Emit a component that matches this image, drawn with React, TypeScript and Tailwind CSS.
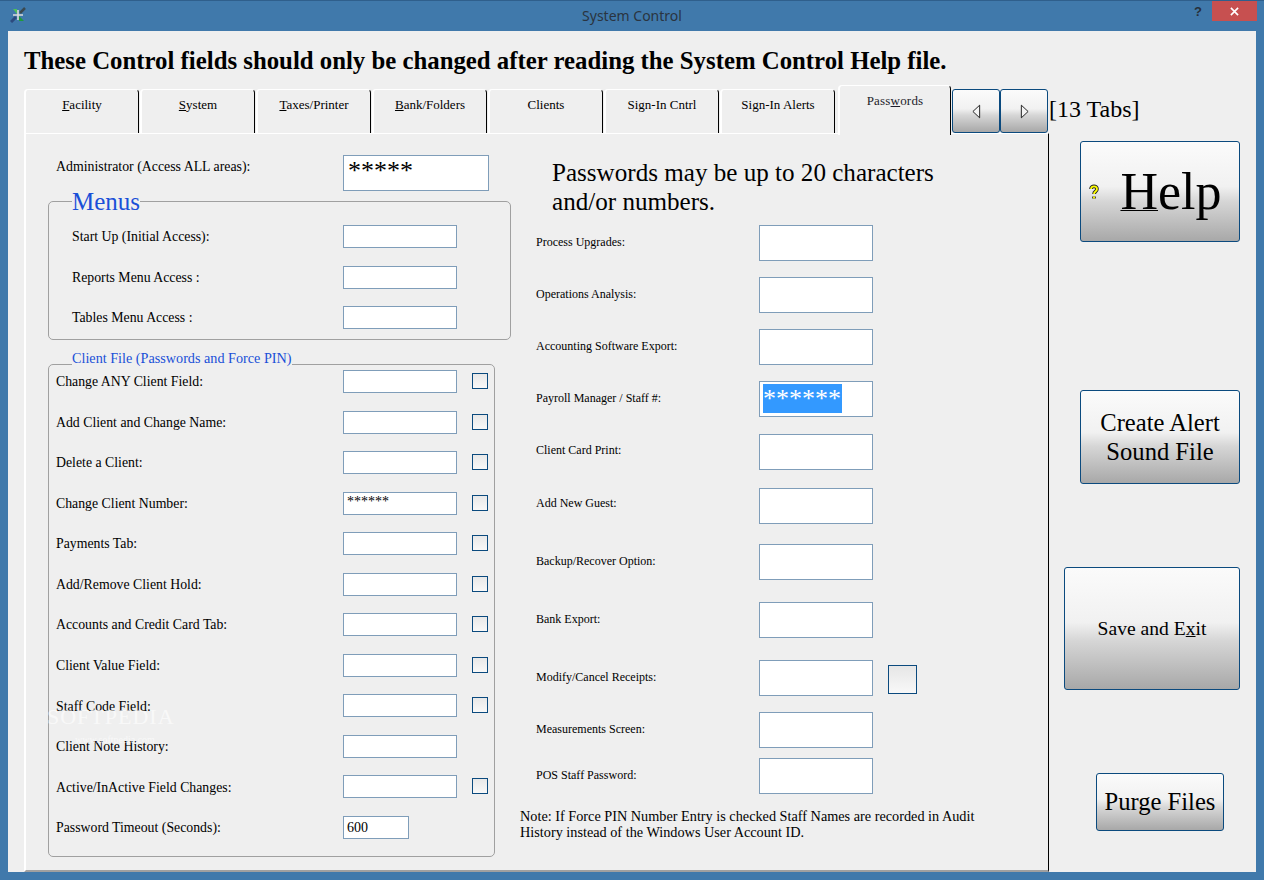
const serif = "font-['Liberation_Serif','Times_New_Roman',serif]";

const tabs = [
  { label: "acility", key: "F" },
  { label: "ystem", key: "S" },
  { label: "axes/Printer", key: "T" },
  { label: "ank/Folders", key: "B" },
  { label: "Clients", key: "" },
  { label: "Sign-In Cntrl", key: "" },
  { label: "Sign-In Alerts", key: "" },
];

const clientRows = [
  { label: "Change ANY Client Field:", check: true },
  { label: "Add Client and Change Name:", check: true },
  { label: "Delete a Client:", check: true },
  { label: "Change Client Number:", check: true, value: "******" },
  { label: "Payments Tab:", check: true },
  { label: "Add/Remove Client Hold:", check: true },
  { label: "Accounts and Credit Card Tab:", check: true },
  { label: "Client Value Field:", check: true },
  { label: "Staff Code Field:", check: true },
  { label: "Client Note History:", check: false },
  { label: "Active/InActive Field Changes:", check: true },
];

// gaps are the distance down from the previous field, the form isn't on an even pitch
const rightRows = [
  { label: "Process Upgrades:", mt: "mt-0", pb: "pb-[2px]" },
  { label: "Operations Analysis:", mt: "mt-[16px]", pb: "pb-[2px]" },
  { label: "Accounting Software Export:", mt: "mt-[16px]", pb: "pb-[2px]" },
  { label: "Payroll Manager / Staff #:", mt: "mt-[16px]", pb: "pb-[2px]", selected: "******" },
  { label: "Client Card Print:", mt: "mt-[17px]", pb: "pb-[4px]" },
  { label: "Add New Guest:", mt: "mt-[18px]", pb: "pb-[6px]" },
  { label: "Backup/Recover Option:", mt: "mt-[20px]", pb: "pb-[2px]" },
  { label: "Bank Export:", mt: "mt-[22px]", pb: "pb-[2px]" },
  { label: "Modify/Cancel Receipts:", mt: "mt-[22px]", pb: "pb-[2px]", box: true },
  { label: "Measurements Screen:", mt: "mt-[16px]", pb: "pb-[2px]" },
  { label: "POS Staff Password:", mt: "mt-[10px]", pb: "pb-[2px]" },
];

const gradient = "bg-[linear-gradient(to_bottom,#fbfbfb_0%,#f1f1f1_45%,#d6d6d6_60%,#a8a8a8_100%)]";
const button = `border border-[#0b4a7e] rounded-[3px] ${gradient} text-black ${serif}`;

function Field({ className, children }: { className: string; children?: React.ReactNode }) {
  return <div className={`bg-white border border-[#7f9db9] shrink-0 ${className}`}>{children}</div>;
}

function Check() {
  return <div className="w-4 h-4 shrink-0 ml-[15px] -mt-[1px] border border-[#0b4a7e] bg-[linear-gradient(to_bottom,#e8e8e8,#f8f8f8)]" />;
}

function Menus() {
  const rows = ["Start Up (Initial Access):", "Reports Menu Access :", "Tables Menu Access :"];
  return (
    <div className="relative mt-[10px] w-[463px] h-[139px] border border-[#a0a0a0] rounded-[5px] pt-[23px] pl-[23px]">
      <div className="absolute left-[23px] -top-[14px] bg-[#efefef] text-[#1a4fd8] text-[25px] leading-[28px]">Menus</div>
      <div className="flex flex-col gap-[17.5px]">
        {rows.map((r) => (
          <div key={r} className="flex items-center h-[23px]">
            <div className="w-[271px] text-[13.8px] pt-[2px]">{r}</div>
            <Field className="w-[114px] h-[23px]" />
          </div>
        ))}
      </div>
    </div>
  );
}

function ClientFile() {
  return (
    <div className="relative mt-[24px] w-[447px] h-[493px] border border-[#a0a0a0] rounded-[5px] pt-[5px] pl-[7px]">
      <div className="absolute left-[23px] -top-[15px] bg-[#efefef] text-[#1a4fd8] text-[14.2px] leading-[16px] pb-[3px]">
        Client File (Passwords and Force PIN)
      </div>
      <div className="flex flex-col gap-[17.55px]">
        {clientRows.map((r) => (
          <div key={r.label} className="flex items-center h-[23px]">
            <div className="w-[287px] text-[13.8px] pt-[2px]">{r.label}</div>
            <Field className="w-[114px] h-[23px] pl-[3px] text-[14px] leading-[17px]">{r.value}</Field>
            {r.check && <Check />}
          </div>
        ))}
        <div className="flex items-center h-[23px]">
          <div className="w-[287px] text-[13.8px] pt-[2px]">Password Timeout (Seconds):</div>
          <Field className="w-[66px] h-[23px] pl-[3px] text-[14px] leading-[21px]">600</Field>
        </div>
      </div>
    </div>
  );
}

function RightForm() {
  return (
    <div className="w-[500px] pt-[25px] pl-[25px]">
      <div className="pl-[31px] text-[25.1px] leading-[29px] h-[67px] -mt-[1px]">
        Passwords may be up to 20 characters
        <br />
        and/or numbers.
      </div>
      <div className="flex flex-col pl-[15px]">
        {rightRows.map((r) => (
          <div key={r.label} className={`flex items-center h-[36px] ${r.mt}`}>
            <div className={`w-[223px] text-[12px] ${r.pb}`}>{r.label}</div>
            <Field className="w-[114px] h-[36px] pl-[3px] pt-[2px]">
              {r.selected && (
                <span className="block w-[79px] h-[29px] bg-[#3399ff] text-white text-[26px] leading-[29px]">{r.selected}</span>
              )}
            </Field>
            {r.box && (
              <div className="w-[29px] h-[29px] ml-[15px] mt-[2px] border border-[#0b4a7e] bg-[linear-gradient(to_bottom,#e6e6e6,#f8f8f8)]" />
            )}
          </div>
        ))}
      </div>
      <p className="mt-[14px] -ml-[1px] text-[14.25px] leading-[16px] w-[480px]">
        Note: If Force PIN Number Entry is checked Staff Names are recorded in Audit
        <br />
        History instead of the Windows User Account ID.
      </p>
    </div>
  );
}

export default function App() {
  return (
    <div className={`relative w-[1264px] h-[880px] overflow-hidden bg-[#4079ab] border-t border-[#2f5f8c] flex flex-col ${serif} text-black`}>
      {/* title bar */}
      <div className="relative h-[30px] shrink-0 flex justify-center pt-[5px]">
        <svg viewBox="0 0 16 16" className="absolute left-[10px] top-[6px] w-4 h-4">
          <path d="M1 15 L6 10" stroke="#2c4a7e" strokeWidth="3" />
          <path d="M15 1 L10 6" stroke="#3b4a50" strokeWidth="2.5" />
          <path d="M9 9 L14 14 L9 14 Z" fill="#1f9a3a" />
          <path d="M3 2 L7 2 L7 7 Z" fill="#4fc05a" />
          <path d="M8 3 V13 M3 8 H13" stroke="#dcdcdc" strokeWidth="1.6" />
        </svg>
        <span className="font-['Noto_Sans',sans-serif] text-[14px] leading-[19px] text-[#2a3440]">System Control</span>
        <span className="absolute left-[1194px] top-[2px] font-['Liberation_Sans',sans-serif] font-bold text-[13px] leading-[18px] text-[#27303a]">?</span>
        <div className="absolute left-[1212px] top-0 w-[45px] h-[20px] bg-[#c75050] flex items-center justify-center">
          <svg viewBox="0 0 10 10" className="w-[9px] h-[9px]">
            <path d="M1 1 L9 9 M9 1 L1 9" stroke="#fff" strokeWidth="1.8" />
          </svg>
        </div>
      </div>

      {/* client area */}
      <div className="relative mx-[8px] h-[841px] bg-[#efefef]">
        <h1 className="pl-[16px] pt-[15px] h-[54px] text-[24.8px] leading-[29px] font-bold">
          These Control fields should only be changed after reading the System Control Help file.
        </h1>

        {/* tab strip */}
        <div className="relative z-10 flex items-end h-[48px] pl-[16px]">
          {tabs.map((t) => (
            <div key={t.label} className="w-[115px] mr-[1px] h-[44px] shrink-0 border-t border-l-2 border-white border-r border-r-black rounded-t-[4px] text-center text-[13px] leading-[17px] pt-[6px]">
              <span className="underline">{t.key}</span>
              {t.label}
            </div>
          ))}
          {/* active tab hangs over the page's top line */}
          <div className="w-[113px] h-[50px] -mb-[2px] shrink-0 ml-[2px] bg-[#efefef] border-t border-l-2 border-white border-r border-r-black rounded-t-[4px] text-center text-[13px] leading-[17px] pt-[6px] tracking-[0.2px] text-[#1c1c2a]">
            Pass<span className="underline">w</span>ords
          </div>
          <div className="flex h-[44px] shrink-0 ml-[1px]">
            <button className={`w-[48px] h-[44px] flex items-center justify-center ${button}`}>
              <svg viewBox="0 0 10 16" className="w-[9px] h-[15px]">
                <path d="M8.5 1 V15 L1 8 Z" fill="#f4f4f4" stroke="#111" />
              </svg>
            </button>
            <button className={`w-[48px] h-[44px] flex items-center justify-center ${button}`}>
              <svg viewBox="0 0 10 16" className="w-[9px] h-[15px]">
                <path d="M1.5 1 V15 L9 8 Z" fill="#f4f4f4" stroke="#111" />
              </svg>
            </button>
          </div>
          <div className="h-[44px] pl-[1px] pt-[2px] text-[24px] leading-[36px] whitespace-nowrap">[13 Tabs]</div>
        </div>

        <div className="flex h-[739px]">
          {/* tab page */}
          <div className="w-[1025px] ml-[16px] shrink-0 h-[739px] border-l-2 border-t border-white border-b-2 border-b-[#a0a0a0] border-r border-r-black flex">
            <div className="w-[470px] shrink-0 pl-[22px] pt-[21px]">
              <div className="flex pl-[8px] h-[36px]">
                <div className="w-[287px] text-[13.85px] leading-[18px] pt-[3px]">Administrator (Access ALL areas):</div>
                <Field className="w-[146px] h-[36px] pl-[4px] pt-[1px] text-[26px] leading-[28px]">*****</Field>
              </div>
              <Menus />
              <ClientFile />
            </div>
            <RightForm />
          </div>

          {/* right hand buttons */}
          <div className="relative flex-1 flex flex-col items-end pr-[16px]">
            <button className={`mt-[8px] w-[160px] h-[101px] flex items-center justify-center gap-[21px] shrink-0 pr-[9px] ${button}`}>
              <svg viewBox="0 0 10 16" className="w-[10px] h-[16px]">
                <path d="M2 5 C2 1.5 8 1.5 8 5 C8 7.5 5 7.5 5 10 M5 12.5 V14.5" fill="none" stroke="#222" strokeWidth="3.6" />
                <path d="M2 5 C2 1.5 8 1.5 8 5 C8 7.5 5 7.5 5 10 M5 12.5 V14.5" fill="none" stroke="#ffff00" strokeWidth="1.8" />
              </svg>
              <span className="text-[52px] leading-[60px]">
                <span className="underline decoration-1">H</span>elp
              </span>
            </button>
            <button className={`mt-[148px] w-[160px] h-[94px] shrink-0 text-[24.6px] leading-[29px] ${button}`}>
              Create Alert
              <br />
              Sound File
            </button>
            <button className={`mt-[83px] w-[176px] h-[123px] shrink-0 text-[19.6px] ${button}`}>
              Save and E<span className="underline">x</span>it
            </button>
            <button className={`mt-[83px] mr-[16px] w-[128px] h-[58px] shrink-0 text-[24.6px] ${button}`}>Purge Files</button>
          </div>
        </div>
      </div>

      {/* Softpedia watermark */}
      <div className="absolute left-[47px] top-[703px] pointer-events-none text-white/60">
        <div className="text-[22px] leading-[26px] tracking-[1px]">SOFTPEDIA</div>
        <div className="mt-[4px] pl-[28px] text-[10px] leading-[12px]">www.softpedia.com</div>
      </div>
    </div>
  );
}
